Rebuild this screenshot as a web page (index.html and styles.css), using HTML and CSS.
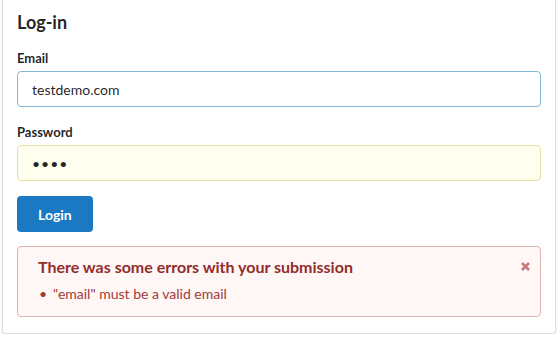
FILE: index.html
```html
<!DOCTYPE html>
<html lang="en">
<head>
  <meta charset="UTF-8">
  <title>Log-in</title>
  <meta name="viewport" content="width=device-width, initial-scale=1.0">
  <link rel="stylesheet" href="styles.css">
</head>
<body>
  <div class="page">
    <div class="segment">
      <h2 class="header">Log-in</h2>

      <form class="login-form" onsubmit="return false;">
        <div class="field">
          <label for="email">Email</label>
          <input type="text" id="email" class="input focused" value="testdemo.com">
        </div>

        <div class="field">
          <label for="password">Password</label>
          <input type="password" id="password" class="input autofilled" value="1234">
        </div>

        <button type="submit" class="button">Login</button>

        <div class="message negative">
          <div class="message-head">
            <div class="message-title">There was some errors with your submission</div>
            <svg class="close" width="9" height="9" viewBox="0 0 9 9" aria-hidden="true">
              <path d="M1 1 L8 8 M8 1 L1 8" stroke="currentColor" stroke-width="2.6" fill="none"/>
            </svg>
          </div>
          <ul class="message-list">
            <li>"email" must be a valid email</li>
          </ul>
        </div>
      </form>
    </div>
  </div>
</body>
</html>
```

FILE: styles.css
```css
:root {
  --text: rgba(0, 0, 0, 0.87);
  --segment-border: rgba(34, 36, 38, 0.15);
  --primary: #1b79c4;
  --error-bg: #fff6f6;
  --error-border: #e0b4b4;
  --error-title: #912d2b;
  --error-text: #9f3a38;
}

body {
  margin: 0;
  font-family: 'Lato', 'Helvetica Neue', Arial, sans-serif;
  font-size: 14px;
  color: var(--text);
  background: #fff;
}

.page {
  padding: 0 3px 0 2px;
}

.segment {
  background: #fff;
  border: 1px solid var(--segment-border);
  border-top: none;
  border-radius: 0 0 4px 4px;
  box-shadow: 0 1px 2px 0 var(--segment-border);
  padding: 11px 14px 16px;
}

.header {
  margin: 0 0 17px;
  font-size: 18px;
  line-height: 22px;
  font-weight: bold;
  color: var(--text);
}

.field {
  margin-bottom: 17px;
}

.field label {
  display: block;
  margin: 0 0 5px;
  font-size: 13px;
  line-height: 16px;
  font-weight: bold;
  color: var(--text);
}

.input {
  display: block;
  width: 100%;
  box-sizing: border-box;
  height: 36px;
  margin: 0;
  padding: 0 14px;
  font-family: inherit;
  font-size: 14px;
  color: var(--text);
  background: #fff;
  border: 1px solid rgba(34, 36, 38, 0.15);
  border-radius: 4px;
  outline: none;
}

.input.focused {
  border-color: #85b7d9;
}

.input.autofilled {
  background: #fffff0;
  border-color: #e5dfa1;
  letter-spacing: 1px;
}

.button {
  display: block;
  height: 36px;
  padding: 0 21px;
  margin: -2px 0 14px;
  font-family: inherit;
  font-size: 14px;
  font-weight: bold;
  color: #fff;
  background: var(--primary);
  border: none;
  border-radius: 4px;
  cursor: pointer;
}

.message {
  background: var(--error-bg);
  border: 1px solid var(--error-border);
  border-radius: 4px;
  padding: 10px 10px 12px 20px;
}

.message-head {
  display: flex;
  justify-content: space-between;
  align-items: center;
}

.message-title {
  font-size: 16px;
  line-height: 20px;
  font-weight: bold;
  color: var(--error-title);
}

.close {
  color: #c47a79;
  margin-top: -1px;
}

.message-list {
  list-style: none;
  margin: 7px 0 0;
  padding: 0;
}

.message-list li {
  display: flex;
  font-size: 14px;
  line-height: 20px;
  color: var(--error-text);
}

.message-list li::before {
  content: "\2022";
  width: 14px;
  padding-left: 1px;
}
```
